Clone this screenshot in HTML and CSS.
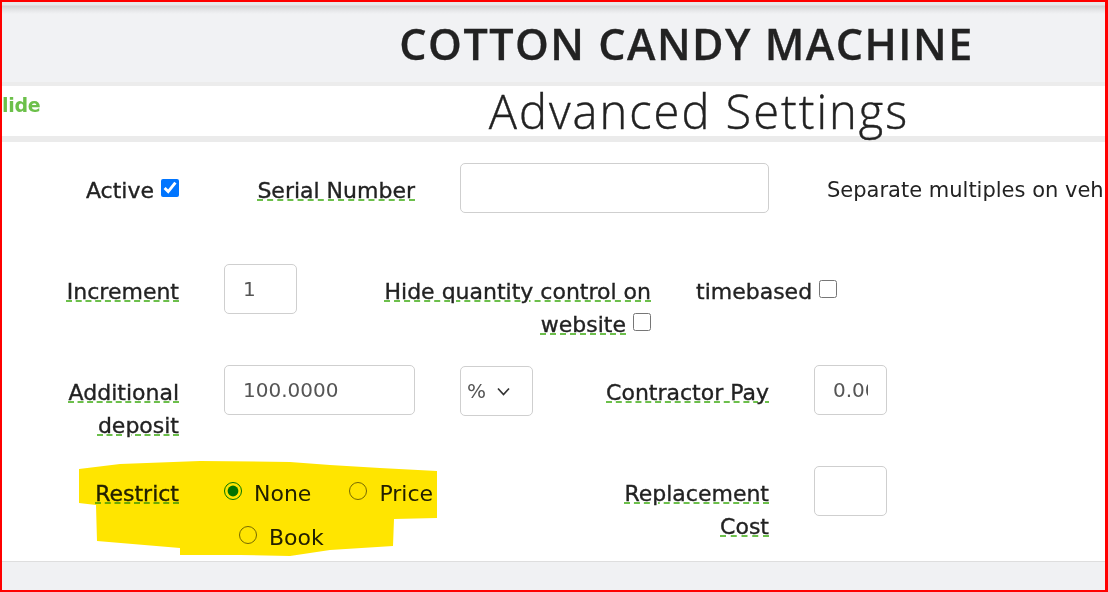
FILE: index.html
```html
<!DOCTYPE html>
<html lang="en">
<head>
<meta charset="utf-8">
<title>Cotton Candy Machine - Advanced Settings</title>
<link rel="stylesheet" href="styles.css">
</head>
<body>
<div class="frame">
  <header class="topbar">
    <h1 class="title">COTTON CANDY MACHINE</h1>
  </header>
  <div class="subbar">
    <span class="hide-link">lide</span>
    <div class="subtitle-wrap"><h2 class="subtitle">Advanced Settings</h2></div>
  </div>
  <main class="content">
    <div class="row">
      <div class="cell lbl s2">Active <input type="checkbox" class="cb" checked></div>
      <div class="cell lbl s2"><span class="tip">Serial Number</span></div>
      <div class="cell s3"><input type="text" class="field" value=""></div>
      <div class="cell note s4">Separate multiples on veh</div>
    </div>
    <div class="row">
      <div class="cell lbl s2"><span class="tip">Increment</span></div>
      <div class="cell s1"><input type="text" class="field" value="1"></div>
      <div class="cell lbl s3"><span class="tip">Hide quantity control on website</span> <input type="checkbox" class="cb"></div>
      <div class="cell plain s2">timebased <input type="checkbox" class="cb"></div>
    </div>
    <div class="row">
      <div class="cell lbl s2"><span class="tip">Additional deposit</span></div>
      <div class="cell s2"><input type="text" class="field" value="100.0000"></div>
      <div class="cell s1">
        <div class="select-wrap">
          <select class="field select"><option>%</option><option>$</option></select>
          <svg class="chev" width="13" height="9" viewBox="0 0 13 9"><path d="M1 1.5 L6.5 7.5 L12 1.5" fill="none" stroke="#333" stroke-width="1.7"/></svg>
        </div>
      </div>
      <div class="cell lbl s2"><span class="tip">Contractor Pay</span></div>
      <div class="cell s1"><input type="text" class="field" value="0.0000"></div>
    </div>
    <div class="row last">
      <div class="cell lbl s2"><span class="tip">Restrict</span></div>
      <div class="cell s3">
        <div class="radios">
          <label class="opt"><input type="radio" name="restrict" class="rd" checked><span>None</span></label>
          <label class="opt"><input type="radio" name="restrict" class="rd"><span>Price</span></label>
          <label class="opt"><input type="radio" name="restrict" class="rd"><span>Book</span></label>
        </div>
      </div>
      <div class="cell lbl s2"><span class="tip">Replacement Cost</span></div>
      <div class="cell s1"><input type="text" class="field" value=""></div>
    </div>
  </main>
  <footer class="bottombar"></footer>
  <svg class="highlight" width="1108" height="592" viewBox="0 0 1108 592">
    <path d="M79 469 L120 464 L200 461 L290 462 L330 465 L380 468 L437 471 L437 518 L394 519 L393 546 L330 550 L290 556 L240 555 L180 555 L180 548 L97 541 L96 505 L79 503 Z" fill="#ffe500"/>
  </svg>
</div>
</body>
</html>
```

FILE: styles.css
```css
html, body {
  margin: 0;
  padding: 0;
  background: #fff;
}

.frame {
  position: relative;
  width: 1108px;
  height: 592px;
  box-sizing: border-box;
  border-style: solid;
  border-color: #ff0000;
  border-width: 2px 3px 2px 2px;
  overflow: hidden;
  display: flex;
  flex-direction: column;
  font-family: "DejaVu Sans", sans-serif;
  color: #222;
}

.topbar {
  height: 80px;
  flex: none;
  background: linear-gradient(to bottom, #e8e9eb 0, #e8e9eb 3px, #d2d3d5 4px, #e4e5e7 8px, #f1f2f4 12px, #f1f2f4 100%);
  display: flex;
  align-items: center;
  justify-content: center;
  padding-left: 266px;
  box-sizing: border-box;
}

.title {
  margin: 0;
  font-family: "Open Sans", sans-serif;
  font-weight: 600;
  font-size: 43px;
  letter-spacing: 1.5px;
  color: #222;
  line-height: 1;
  padding-top: 3px;
  -webkit-text-stroke: 0.3px #222;
}

.subbar {
  flex: none;
  height: 50px;
  border-top: 4px solid #ececec;
  border-bottom: 6px solid #ebebeb;
  display: flex;
  background: #fff;
}

.hide-link {
  width: 40px;
  flex: none;
  font-size: 19px;
  font-weight: 600;
  color: #6cc04a;
  padding-top: 8px;
  line-height: 22px;
  letter-spacing: -0.3px;
}

.subtitle-wrap {
  flex: 1;
  text-align: center;
  padding-left: 251px;
}

.subtitle {
  margin: 0;
  font-family: "Open Sans", sans-serif;
  font-weight: 300;
  font-size: 47px;
  letter-spacing: 2px;
  line-height: 50px;
  color: #222;
  -webkit-text-stroke: 0.4px #222;
}

.content {
  flex: 1;
  padding-top: 21px;
  background: #fff;
}

.row {
  display: grid;
  grid-template-columns: repeat(12, 118px);
  margin-left: -37px;
  min-height: 77px;
  margin-bottom: 24px;
}

.row.last {
  margin-bottom: 0;
}

.cell {
  padding: 0 22px 0 23px;
  font-size: 22px;
  line-height: 33px;
  min-width: 0;
}

.s1 { grid-column: span 1; }
.s2 { grid-column: span 2; }
.s3 { grid-column: span 3; }
.s4 { grid-column: span 4; }

.lbl {
  text-align: right;
  padding-top: 11px;
  -webkit-text-stroke: 0.35px #222;
}

.plain {
  padding-top: 11px;
  -webkit-text-stroke: 0.35px #222;
}

.note {
  padding-top: 11px;
  padding-left: 36px;
  white-space: nowrap;
  font-size: 21px;
}

.tip {
  text-decoration-line: underline;
  text-decoration-style: dashed;
  text-decoration-color: #6cbf4b;
  text-decoration-thickness: 2px;
  text-underline-offset: 1px;
}

.cb {
  width: 18px;
  height: 18px;
  margin: 0;
  vertical-align: 1px;
}

.field {
  display: block;
  width: 100%;
  height: 50px;
  box-sizing: border-box;
  border: 1px solid #cfcfcf;
  border-radius: 5px;
  padding: 0 18px;
  font-family: "DejaVu Sans", sans-serif;
  font-size: 20px;
  color: #555;
  background: #fff;
  outline: none;
}

.select-wrap {
  position: relative;
}

.select {
  -webkit-appearance: none;
  appearance: none;
  padding: 0 6px;
  margin-top: 1px;
}

.chev {
  position: absolute;
  right: 23px;
  top: 21px;
  pointer-events: none;
}

.radios {
  display: flex;
  flex-wrap: wrap;
  row-gap: 11px;
  padding-top: 11px;
}

.opt {
  display: flex;
  align-items: flex-start;
  line-height: 33px;
  margin-right: 23px;
}

.opt + .opt {
  margin-left: 15px;
}

.rd {
  width: 18px;
  height: 18px;
  margin: 5px 12px 0 0;
  accent-color: #008000;
}

.bottombar {
  flex: none;
  height: 29px;
  box-sizing: border-box;
  border-top: 1px solid #dedede;
  background: #f0f1f3;
}

.highlight {
  position: absolute;
  left: -2px;
  top: -2px;
  mix-blend-mode: multiply;
  pointer-events: none;
}
```
